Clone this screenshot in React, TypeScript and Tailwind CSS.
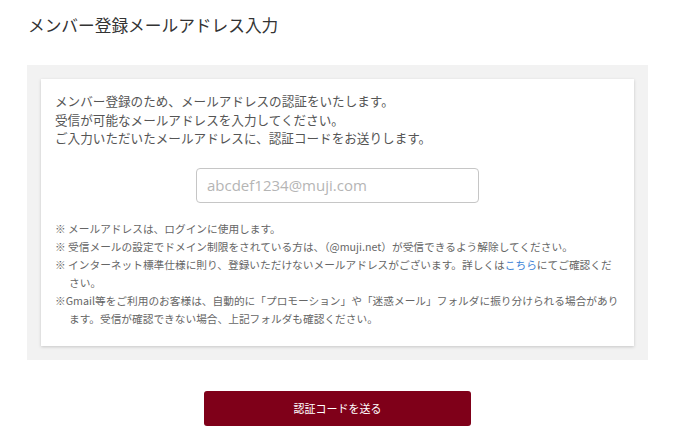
import React from "react";

const jp = { fontFamily: '"Noto Sans CJK JP", "Noto Sans", sans-serif' };

export default function App() {
  return (
    <div className="w-[680px] h-[429px] bg-white overflow-hidden" style={jp}>
      <div className="ml-[27px] w-[621px]">
        <h1 className="pt-[13px] pl-[1px] text-[16.7px] leading-[24px] text-[#333] font-normal">
          メンバー登録メールアドレス入力
        </h1>
        <div className="mt-[28px] bg-[#f2f2f2] p-[14px]">
          <div className="bg-white shadow-[0_1px_3px_rgba(0,0,0,0.18)] px-[14px] pt-[13px] pb-[18px]">
            <div className="text-[12.6px] leading-[18.5px] text-[#555]">
              <p>メンバー登録のため、メールアドレスの認証をいたします。</p>
              <p>受信が可能なメールアドレスを入力してください。</p>
              <p>ご入力いただいたメールアドレスに、認証コードをお送りします。</p>
            </div>
            <div className="mt-[20px] flex justify-center">
              <input
                type="text"
                placeholder="abcdef1234@muji.com"
                className="w-[283px] h-[35px] border border-[#c6c6c6] rounded-[4px] px-[10px] text-[15px] text-[#333] placeholder:text-[#b5b5b5] outline-none"
                style={{ fontFamily: '"Open Sans", "Noto Sans", sans-serif' }}
              />
            </div>
            <div className="mt-[17px] w-[566px] text-[10.7px] leading-[18px] text-[#666]">
              <p className="pl-[14px] indent-[-14px]">※ メールアドレスは、ログインに使用します。</p>
              <p className="pl-[14px] indent-[-14px]">
                ※ 受信メールの設定でドメイン制限をされている方は、（@muji.net）が受信できるよう解除してください。
              </p>
              <p className="pl-[14px] indent-[-14px]">
                ※ インターネット標準仕様に則り、登録いただけないメールアドレスがございます。詳しくは<span className="text-[#3b82d6]">こちら</span>にてご確認くだ
                <br />
                さい。
              </p>
              <p className="pl-[14px] indent-[-14px]">
                ※Gmail等をご利用のお客様は、自動的に「プロモーション」や「迷惑メール」フォルダに振り分けられる場合があり
                <br />
                ます。受信が確認できない場合、上記フォルダも確認ください。
              </p>
            </div>
          </div>
        </div>
        <div className="mt-[31px] flex justify-center">
          <button className="w-[267px] h-[35px] rounded-[3px] bg-[#7f0019] text-white text-[11px] leading-none">
            認証コードを送る
          </button>
        </div>
      </div>
    </div>
  );
}
